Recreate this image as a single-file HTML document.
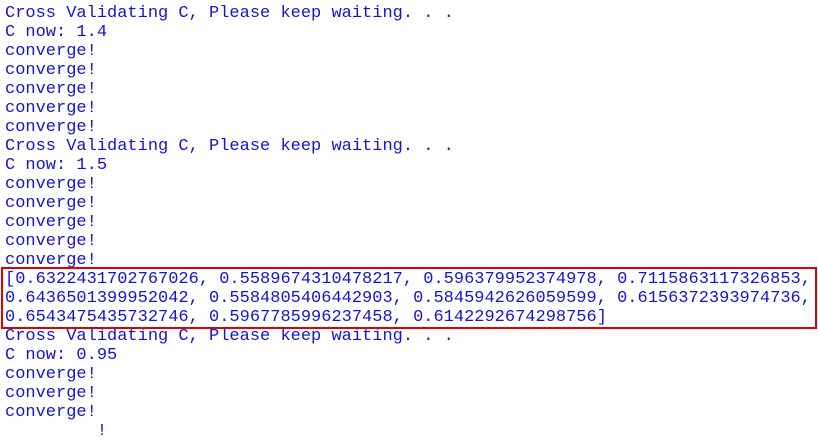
<!DOCTYPE html>
<html><head><meta charset="utf-8"><style>
html,body{margin:0;padding:0;background:#fff;width:818px;height:426px;overflow:hidden}
pre{margin:0;position:absolute;left:5px;top:4px;font-family:"Liberation Mono",monospace;font-size:17px;letter-spacing:0;line-height:19px;color:#1414d4}
.box{position:absolute;left:1px;top:267px;width:812px;height:58px;border:2px solid #e00000}
</style></head><body>
<pre>Cross Validating C, Please keep waiting. . .
C now: 1.4
converge!
converge!
converge!
converge!
converge!
Cross Validating C, Please keep waiting. . .
C now: 1.5
converge!
converge!
converge!
converge!
converge!
[0.6322431702767026, 0.5589674310478217, 0.596379952374978, 0.7115863117326853,
0.6436501399952042, 0.5584805406442903, 0.5845942626059599, 0.6156372393974736,
0.6543475435732746, 0.5967785996237458, 0.6142292674298756]
Cross Validating C, Please keep waiting. . .
C now: 0.95
converge!
converge!
converge!
         !</pre>
<div class="box"></div>
</body></html>
